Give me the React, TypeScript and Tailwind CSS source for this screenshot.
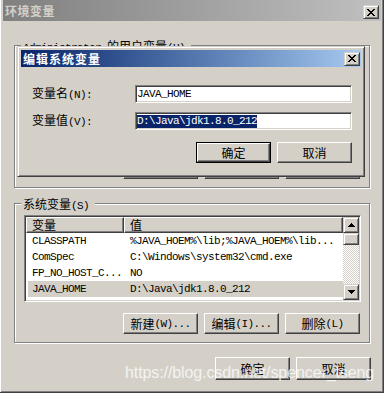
import React from 'react';

type Row = { name: string; value: string; selected?: boolean };

const SYSTEM_VARS: Row[] = [
  { name: 'CLASSPATH', value: '%JAVA_HOEM%\\lib;%JAVA_HOEM%\\lib...' },
  { name: 'ComSpec', value: 'C:\\Windows\\system32\\cmd.exe' },
  { name: 'FP_NO_HOST_C...', value: 'NO' },
  { name: 'JAVA_HOME', value: 'D:\\Java\\jdk1.8.0_212', selected: true },
];

const RAISED =
  'border border-t-white border-l-white border-r-[#404040] border-b-[#404040] shadow-[inset_-1px_-1px_#808080]';
const RAISED_SB =
  'border border-t-[#d4d0c8] border-l-[#d4d0c8] border-r-[#404040] border-b-[#404040] shadow-[inset_1px_1px_white,inset_-1px_-1px_#808080]';
const SUNKEN =
  'border border-t-[#808080] border-l-[#808080] border-r-white border-b-white shadow-[inset_1px_1px_#404040,inset_-1px_-1px_#d4d0c8]';

/** Chinese runs get the CJK font at 12px, the rest stays in the 6px-wide mono face. */
function Txt({ s }: { s: string }) {
  return (
    <>
      {s
        .split(/([\u3400-\u9fff]+)/)
        .filter(Boolean)
        .map((part, i) =>
          /[\u3400-\u9fff]/.test(part) ? (
            <span key={i} className="font-['Noto_Sans_CJK_SC',sans-serif] text-[12px] tracking-normal">
              {part}
            </span>
          ) : (
            <span key={i}>{part}</span>
          ),
        )}
    </>
  );
}

function CloseGlyph() {
  return (
    <svg width="8" height="7" viewBox="0 0 8 7" shapeRendering="crispEdges">
      <path
        fill="#000"
        d="M0 0h2v1H0z M6 0h2v1H6z M1 1h2v1H1z M5 1h2v1H5z M2 2h4v1H2z M3 3h2v1H3z M2 4h4v1H2z M1 5h2v1H1z M5 5h2v1H5z M0 6h2v1H0z M6 6h2v1H6z"
      />
    </svg>
  );
}

function CloseButton({ className = '' }: { className?: string }) {
  return (
    <div className={`flex h-[14px] w-[16px] items-center justify-center bg-[#d4d0c8] ${RAISED_SB} ${className}`}>
      <CloseGlyph />
    </div>
  );
}

function Arrow({ up }: { up?: boolean }) {
  return (
    <svg width="7" height="4" viewBox="0 0 7 4" shapeRendering="crispEdges">
      <path
        fill="#000"
        d={up ? 'M3 0h1v1H3z M2 1h3v1H2z M1 2h5v1H1z M0 3h7v1H0z' : 'M0 0h7v1H0z M1 1h5v1H1z M2 2h3v1H2z M3 3h1v1H3z'}
      />
    </svg>
  );
}

function Button({ label, tall, isDefault }: { label: string; tall?: boolean; isDefault?: boolean }) {
  const size = tall ? 'h-[23px] w-[75px]' : 'h-[21px] w-[75px]';
  if (isDefault) {
    return (
      <div className={`${size} border border-black`}>
        <div className={`flex h-full w-full items-center justify-center leading-[12px] ${RAISED}`}>
          <Txt s={label} />
        </div>
      </div>
    );
  }
  return (
    <div className={`${size} flex items-center justify-center leading-[12px] ${RAISED}`}>
      <Txt s={label} />
    </div>
  );
}

function GroupBox({
  label,
  className = '',
  children,
}: {
  label: string;
  className?: string;
  children: React.ReactNode;
}) {
  return (
    <div
      className={`relative ml-[11px] w-[356px] border border-[#808080] shadow-[inset_1px_1px_white,1px_1px_white] ${className}`}
    >
      <div className="absolute -top-[6px] left-[6px] bg-[#d4d0c8] pl-[2px] pr-[6px] leading-[12px]">
        <Txt s={label} />
      </div>
      {children}
    </div>
  );
}

function VarButtons() {
  return (
    <div className="mt-[11px] flex justify-end gap-[6px]">
      <Button label="新建(W)..." />
      <Button label="编辑(I)..." />
      <Button label="删除(L)" />
    </div>
  );
}

function SystemList() {
  return (
    <div className={`flex h-[87px] w-[337px] bg-white ${SUNKEN} p-px`}>
      <div className="flex min-w-0 flex-1 flex-col">
        <div className="flex h-[16px] leading-[14px]">
          <div className={`w-[98px] bg-[#d4d0c8] pl-[5px] ${RAISED}`}>
            <Txt s="变量" />
          </div>
          <div className={`flex-1 bg-[#d4d0c8] pl-[5px] ${RAISED}`}>
            <Txt s="值" />
          </div>
        </div>
        {SYSTEM_VARS.map((r) => (
          <div key={r.name} className="flex h-[16px] items-center pl-[2px]">
            <div className={`flex h-full flex-1 items-center ${r.selected ? 'bg-[#d4d0c8]' : ''}`}>
              <span className="w-[102px] pl-[4px]">{r.name}</span>
              <span>{r.value}</span>
            </div>
          </div>
        ))}
      </div>
      <div className="flex w-[16px] flex-col">
        <div className={`flex h-[16px] items-center justify-center bg-[#d4d0c8] ${RAISED_SB}`}>
          <Arrow up />
        </div>
        <div className={`h-[12px] bg-[#d4d0c8] ${RAISED_SB}`} />
        <div className="flex-1 bg-[repeating-conic-gradient(#ffffff_0_25%,#d4d0c8_0_50%)] bg-[length:2px_2px]" />
        <div className={`flex h-[16px] items-center justify-center bg-[#d4d0c8] ${RAISED_SB}`}>
          <Arrow />
        </div>
      </div>
    </div>
  );
}

function EditDialog() {
  return (
    <div
      className={`absolute left-[17px] top-[46px] z-10 flex h-[131px] w-[348px] flex-col bg-[#d4d0c8] p-[3px] border border-t-[#d4d0c8] border-l-[#d4d0c8] border-r-[#404040] border-b-[#404040] shadow-[inset_1px_1px_white,inset_-1px_-1px_#808080]`}
    >
      <div className="flex h-[17px] items-center justify-between bg-linear-to-r from-[#0a246a] to-[#a6caf0] pl-[2px] pr-[1px]">
        <span className="font-['Noto_Sans_CJK_SC',sans-serif] text-[12px] font-bold leading-[17px] tracking-[1px] text-white">
          编辑系统变量
        </span>
        <CloseButton />
      </div>
      <div className="flex flex-col pl-[11px] pr-[9px] pt-[18px]">
        <div className="flex items-center">
          <div className="w-[103px] leading-[12px]">
            <Txt s="变量名(N):" />
          </div>
          <div className={`flex h-[18px] w-[217px] items-center bg-white pl-[1px] ${SUNKEN}`}>JAVA_HOME</div>
        </div>
        <div className="mt-[9px] flex items-center">
          <div className="w-[103px] leading-[12px]">
            <Txt s="变量值(V):" />
          </div>
          <div className={`flex h-[18px] w-[217px] items-center bg-white pl-[1px] ${SUNKEN}`}>
            <span className="bg-[#0a246a] leading-[13px] text-white">D:\Java\jdk1.8.0_212</span>
          </div>
        </div>
        <div className="mt-[12px] flex justify-end gap-[6px]">
          <Button label="确定" isDefault />
          <Button label="取消" />
        </div>
      </div>
    </div>
  );
}

export default function App() {
  return (
    <div className="relative h-[393px] w-[384px] overflow-hidden border-r border-b border-r-[#404040] border-b-[#404040] bg-[#d4d0c8] pl-[3px] pr-[2px] font-['Liberation_Mono',monospace] text-[11px] tracking-[-0.6px] text-black shadow-[inset_1px_0_white,inset_-1px_-1px_#808080]">
      <div className="flex h-[21px] items-start justify-between bg-linear-to-r from-[#808080] to-[#c0c0c0] pl-[2px] pr-[2px]">
        <span className="font-['Noto_Sans_CJK_SC',sans-serif] text-[12px] font-bold leading-[22px] tracking-[0.5px] text-[#d4d0c8]">
          环境变量
        </span>
        <CloseButton className="mt-[5px]" />
      </div>

      <GroupBox label="Administrator 的用户变量(U)" className="mt-[24px] h-[143px]">
        <div className="flex h-full flex-col pb-[8px] pl-[9px] pr-[9px] pt-[11px]">
          <div className={`w-[337px] flex-1 bg-white ${SUNKEN}`} />
          <VarButtons />
        </div>
      </GroupBox>

      <GroupBox label="系统变量(S)" className="mt-[15px] h-[140px]">
        <div className="flex h-full flex-col pb-[8px] pl-[9px] pr-[9px] pt-[11px]">
          <SystemList />
          <VarButtons />
        </div>
      </GroupBox>

      <div className="mt-[14px] flex justify-end gap-[6px] pr-[10px]">
        <Button label="确定" tall />
        <Button label="取消" tall />
      </div>

      <EditDialog />

      <div className="pointer-events-none absolute left-[125px] top-[363px] z-20 font-['Liberation_Sans',Arial,sans-serif] text-[16px] leading-[20px] tracking-[-0.1px] text-white/75">
        https://blog.csdn.net/spencer_tseng
      </div>
    </div>
  );
}
